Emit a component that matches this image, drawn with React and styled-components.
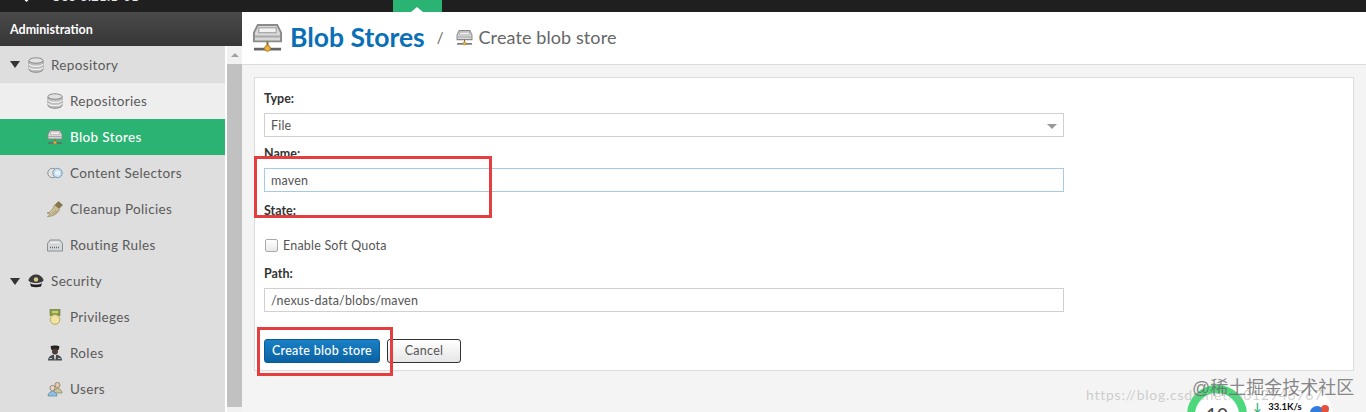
import React from "react";
import styled, { createGlobalStyle } from "styled-components";

const GlobalStyle = createGlobalStyle`
  html, body {
    margin: 0;
    padding: 0;
    height: 412px;
    overflow: hidden;
    background: #f4f4f4;
    font-family: "Lato", "Open Sans", "Liberation Sans", sans-serif;
  }
  * { box-sizing: border-box; }
`;

const Page = styled.div`
  position: relative;
  width: 1366px;
  height: 412px;
  overflow: hidden;
  display: flex;
  flex-direction: column;
`;

const TopBar = styled.div`
  position: relative;
  flex: none;
  height: 12px;
  background: #1f1f1f;
  display: flex;
  align-items: flex-end;
  padding: 0 0 9px 20px;
  gap: 18px;
  color: #e6e6e6;
  font-size: 13px;
  letter-spacing: 0.3px;
  line-height: 14px;
`;

const TopTab = styled.div`
  position: absolute;
  left: 393px;
  top: 0;
  width: 49px;
  height: 12px;
  background: #2bb373;
  &::after {
    content: "";
    position: absolute;
    left: 18px;
    bottom: 0;
    border-left: 6px solid transparent;
    border-right: 6px solid transparent;
    border-bottom: 5px solid #fff;
  }
`;

const Body = styled.div`
  flex: 1;
  display: flex;
  min-height: 0;
`;

const Sidebar = styled.aside`
  flex: none;
  width: 242px;
  display: flex;
  flex-direction: column;
`;

const SideHeader = styled.div`
  flex: none;
  height: 34px;
  background: linear-gradient(#4a4a4a, #363636);
  color: #fff;
  font-size: 12.5px;
  font-weight: 700;
  line-height: 35px;
  padding-left: 10px;
`;

const SideBody = styled.div`
  flex: 1;
  display: flex;
  min-height: 0;
`;

const Nav = styled.nav`
  flex: none;
  width: 225px;
  background: #dedede;
`;

const NavRow = styled.div`
  display: flex;
  align-items: center;
  font-size: 13.5px;
  letter-spacing: 0.35px;
  padding-left: ${(p) => (p.$sub ? "47px" : "10px")};
  height: ${(p) => (p.$tall ? "37px" : "36px")};
  color: ${(p) => (p.$active ? "#fff" : "#5a5a5a")};
  font-weight: ${(p) => (p.$active ? 500 : 400)};
  background: ${(p) =>
    p.$active ? "#2bb373" : p.$light ? "#eeeeee" : "#dedede"};
`;

const Arrow = styled.span`
  flex: none;
  width: 0;
  height: 0;
  margin-right: 8px;
  border-left: 5px solid transparent;
  border-right: 5px solid transparent;
  border-top: 7px solid #333;
`;

const IconBox = styled.span`
  flex: none;
  width: 16px;
  height: 16px;
  display: flex;
  margin-right: 7px;
  svg {
    width: 16px;
    height: 16px;
  }
`;

const Scrollbar = styled.div`
  flex: none;
  width: 17px;
  border-left: 2px solid #fff;
  background: #f1f1f1;
  display: flex;
  flex-direction: column;
  align-items: center;
`;

const ScrollUp = styled.div`
  flex: none;
  height: 18px;
  width: 100%;
  display: flex;
  justify-content: center;
  padding-top: 7px;
  &::before {
    content: "";
    width: 0;
    height: 0;
    border-left: 4px solid transparent;
    border-right: 4px solid transparent;
    border-bottom: 4px solid #a3a3a3;
  }
`;

const ScrollThumb = styled.div`
  width: 100%;
  height: 343px;
  background: #c1c1c1;
`;

const Main = styled.main`
  flex: 1;
  min-width: 0;
  display: flex;
  flex-direction: column;
`;

const PageHeader = styled.header`
  flex: none;
  height: 53px;
  background: #fff;
  border-bottom: 1px solid #dcdcdc;
  display: flex;
  align-items: center;
  padding-left: 10px;
  padding-bottom: 2px;
`;

const HeaderIcon = styled.span`
  display: flex;
  margin-right: 7px;
  svg {
    width: 31px;
    height: 31px;
  }
`;

const Title = styled.h1`
  margin: 0;
  font-size: 26.5px;
  font-weight: 700;
  color: #0a6fb7;
`;

const Slash = styled.span`
  margin: 0 12px;
  font-size: 15px;
  color: #666;
`;

const CrumbIcon = styled.span`
  display: flex;
  margin-right: 6px;
  svg {
    width: 17px;
    height: 17px;
  }
`;

const Crumb = styled.span`
  font-size: 18px;
  letter-spacing: 0.1px;
  color: #666;
`;

const Content = styled.div`
  flex: 1;
  padding: 12px 13px 0 12px;
  background: #f4f4f4;
`;

const Panel = styled.section`
  height: 294px;
  background: #fff;
  border: 1px solid #dcdcdc;
  padding: 13px 9px 0;
  width: 1100px;
`;

const Label = styled.div`
  font-size: 12.5px;
  font-weight: 700;
  color: #333;
  line-height: 15px;
  margin-bottom: 7px;
`;

const Field = styled.div`
  position: relative;
  width: 800px;
  height: 24px;
  padding: 0 6px;
  font-size: 12.5px;
  letter-spacing: 0.2px;
  line-height: 24px;
  color: #555;
  background: #fff;
  border: 1px solid ${(p) => (p.$focus ? "#a5cbe2" : "#d0d0d0")};
  margin-bottom: ${(p) => p.$gap}px;
`;

const Caret = styled.span`
  position: absolute;
  right: 6px;
  top: 10px;
  border-left: 5px solid transparent;
  border-right: 5px solid transparent;
  border-top: 5px solid #999;
`;

const CheckRow = styled.label`
  display: flex;
  align-items: center;
  gap: 5px;
  height: 14px;
  margin: 20px 0 14px 1px;
  font-size: 12.5px;
  letter-spacing: 0.2px;
  color: #555;
`;

const CheckBox = styled.span`
  width: 13px;
  height: 13px;
  background: linear-gradient(#fff, #e8e8e8);
  border: 1px solid #aaa;
  border-radius: 2px;
`;

const Actions = styled.div`
  display: flex;
  gap: 7px;
  margin-top: 27px;
`;

const Button = styled.div`
  height: 24px;
  border-radius: 3px;
  font-size: 12.5px;
  letter-spacing: 0.3px;
  line-height: 22px;
  text-align: center;
  width: ${(p) => (p.$primary ? "116px" : "74px")};
  color: ${(p) => (p.$primary ? "#fff" : "#555")};
  font-weight: ${(p) => (p.$primary ? 500 : 400)};
  background: ${(p) =>
    p.$primary
      ? "linear-gradient(#1a80c6, #0a62a4)"
      : "linear-gradient(#fff, #e6e6e6)"};
  border: 1px solid ${(p) => (p.$primary ? "#0a5a96" : "#333")};
`;

const Callout = styled.div`
  position: absolute;
  border: 3px solid #e53e3e;
  left: ${(p) => p.$x}px;
  top: ${(p) => p.$y}px;
  width: ${(p) => p.$w}px;
  height: ${(p) => p.$h}px;
`;

const SpeedWidget = styled.div`
  position: absolute;
  left: 1187px;
  top: 385px;
  width: 146px;
  height: 60px;
  background: #fff;
  border-radius: 30px;
`;

const Ring = styled.div`
  position: absolute;
  left: 0;
  top: 0;
  width: 60px;
  height: 60px;
  border-radius: 50%;
  border: 8px solid #4cd97b;
  background: #fff;
  text-align: center;
  font-size: 19px;
  line-height: 44px;
  color: #444;
`;

const Speed = styled.div`
  position: absolute;
  left: 66px;
  top: 16px;
  display: flex;
  align-items: center;
  gap: 7px;
  font-size: 9.5px;
  font-weight: 700;
  line-height: 12px;
  color: #111;
`;

const DownArrow = styled.span`
  color: #2bb373;
  font-size: 11px;
`;

const Blob = styled.div`
  position: absolute;
  left: 123px;
  top: 19px;
  display: flex;
  svg {
    width: 20px;
    height: 12px;
  }
`;

const WatermarkUrl = styled.div`
  position: absolute;
  left: 1086px;
  top: 386px;
  font-size: 14px;
  line-height: 18px;
  letter-spacing: 0.75px;
  white-space: nowrap;
  color: rgba(170, 170, 170, 0.55);
`;

const WatermarkBrand = styled.div`
  position: absolute;
  left: 1192px;
  top: 378px;
  font-family: "Liberation Sans", "Noto Sans CJK SC", sans-serif;
  font-size: 18px;
  line-height: 20px;
  white-space: nowrap;
  color: rgba(105, 105, 105, 0.8);
`;

const DbIcon = () => (
  <svg viewBox="0 0 16 16">
    <path d="M1 3.500v9c0 1.400 3.100 2.800 7 2.800s7-1.400 7-2.800v-9" fill="#bdbdbd" stroke="#8c8c8c" />
    <path d="M1 6.800c0 1.400 3.100 2.500 7 2.500s7-1.100 7-2.500M1 10c0 1.400 3.100 2.500 7 2.500s7-1.100 7-2.500" fill="none" stroke="#f4f4f4" strokeWidth="1.200" />
    <ellipse cx="8" cy="3.500" rx="7" ry="2.700" fill="#e2e2e2" stroke="#8c8c8c" />
  </svg>
);

const ServerIcon = () => (
  <svg viewBox="0 0 16 16">
    <path d="M3 1.500h10l2 4v4.500H1V5.500z" fill="#d8d8d8" stroke="#8a8a8a" />
    <rect x="3.500" y="3" width="9" height="2.500" fill="#f2f2f2" stroke="#a5a5a5" strokeWidth=".6" />
    <path d="M1.500 7.500h13" stroke="#a8a8a8" />
    <path d="M8 10v3" stroke="#8a6a2a" />
    <path d="M1 14h14" stroke="#666" strokeWidth="1.400" />
    <circle cx="8" cy="13.600" r="1.500" fill="#f0b040" stroke="#b07a20" strokeWidth=".5" />
  </svg>
);

const VennIcon = () => (
  <svg viewBox="0 0 16 16">
    <circle cx="5.500" cy="8" r="4.700" fill="#e4e4e4" stroke="#8f8f8f" />
    <circle cx="10.500" cy="8" r="4.700" fill="#c4dcee" stroke="#7d9db5" />
    <circle cx="10.500" cy="8" r="2.600" fill="#e6f1f8" />
  </svg>
);

const BrushIcon = () => (
  <svg viewBox="0 0 16 16">
    <path d="M11.500 0.500l4 3.500-3.500 3.500-4-3.500z" fill="#8a7748" stroke="#5f5230" strokeWidth=".5" />
    <path d="M7.500 4l5 4c-1 4-6 7.500-12 7.500 1.500-1 2.500-2 2.500-3-1 .3-2 .2-3-.5 3-.5 6-3.500 7.500-8z" fill="#cbbd95" stroke="#8a7a55" strokeWidth=".6" />
    <path d="M5 13l4-4M7 13.500l3.500-4" stroke="#9c8d66" strokeWidth=".6" />
  </svg>
);

const RouterIcon = () => (
  <svg viewBox="0 0 16 16">
    <path d="M3 3h10l2.500 3.500V14H.5V6.500z" fill="#d5d8da" stroke="#8a8f92" />
    <path d="M3 10.500h10" stroke="#5f6a70" strokeWidth="1.400" strokeDasharray="1 1" />
    <path d="M3.500 5.500h9" stroke="#f5f5f5" />
  </svg>
);

const CapIcon = () => (
  <svg viewBox="0 0 16 16">
    <path d="M0.500 7c1-3.500 4.500-5.500 7.500-5.500s6.500 2 7.500 5.500c0 2-3.500 3-7.500 3S.5 9 .5 7z" fill="#3a3a3a" />
    <path d="M2 10c2 2 10 2 12 0l-1 3.500c-3 1-7 1-10 0z" fill="#1f1f1f" />
    <circle cx="8" cy="6.500" r="2.200" fill="#d7c98f" />
  </svg>
);

const MedalIcon = () => (
  <svg viewBox="0 0 16 16">
    <rect x="3" y="0.500" width="10" height="6" fill="#8d9b45" stroke="#6a7630" strokeWidth=".6" />
    <rect x="5" y="2" width="6" height="2" fill="#c4cf80" />
    <circle cx="8" cy="10.500" r="4.800" fill="#efe4a2" stroke="#b5a75e" />
  </svg>
);

const OfficerIcon = () => (
  <svg viewBox="0 0 16 16">
    <path d="M3.500 1.500c2-1.200 7-1.200 9 0l-1 3.500h-7z" fill="#242424" />
    <circle cx="8" cy="6.500" r="3" fill="#4d3d34" />
    <path d="M1 15.500c0-4 3-5.800 7-5.800s7 1.800 7 5.800z" fill="#464b50" />
    <path d="M7 10h2l-.5 4.500h-1z" fill="#e8e8e8" />
    <path d="M2.500 13.500h2.500M11 13.500h2.500" stroke="#c9c9c9" />
  </svg>
);

const UsersIcon = () => (
  <svg viewBox="0 0 16 16">
    <circle cx="10.500" cy="4" r="2.600" fill="#e8c9a8" stroke="#6a5a4a" strokeWidth=".6" />
    <path d="M6.500 12c0-3 1.800-4.500 4-4.500s4.500 1.500 4.500 4.500z" fill="#c8c39a" stroke="#7a7550" strokeWidth=".6" />
    <circle cx="5.500" cy="7" r="2.600" fill="#f0d4b5" stroke="#5a5a5a" strokeWidth=".6" />
    <path d="M1 15c0-3 2-4.500 4.500-4.500S10 12 10 15z" fill="#8fc0df" stroke="#4a7ea0" strokeWidth=".6" />
  </svg>
);

const DiamondIcon = () => (
  <svg width="13" height="13" viewBox="0 0 13 13">
    <path d="M6.500 0l6 6-6 6-6-6z" fill="#fff" />
  </svg>
);

const navItems = [
  { label: "Repository", icon: <DbIcon />, tall: true },
  { label: "Repositories", icon: <DbIcon />, sub: true, light: true },
  { label: "Blob Stores", icon: <ServerIcon />, sub: true, active: true },
  { label: "Content Selectors", icon: <VennIcon />, sub: true },
  { label: "Cleanup Policies", icon: <BrushIcon />, sub: true },
  { label: "Routing Rules", icon: <RouterIcon />, sub: true },
  { label: "Security", icon: <CapIcon /> },
  { label: "Privileges", icon: <MedalIcon />, sub: true },
  { label: "Roles", icon: <OfficerIcon />, sub: true },
  { label: "Users", icon: <UsersIcon />, sub: true },
];

export default function App() {
  return (
    <Page>
      <GlobalStyle />
      <TopBar>
        <DiamondIcon />
        <span>OSS 3.21.1-01</span>
        <TopTab />
      </TopBar>
      <Body>
        <Sidebar>
          <SideHeader>Administration</SideHeader>
          <SideBody>
            <Nav>
              {navItems.map((item) => (
                <NavRow
                  key={item.label}
                  $sub={item.sub}
                  $active={item.active}
                  $light={item.light}
                  $tall={item.tall}
                >
                  {!item.sub && <Arrow />}
                  <IconBox>{item.icon}</IconBox>
                  {item.label}
                </NavRow>
              ))}
            </Nav>
            <Scrollbar>
              <ScrollUp />
              <ScrollThumb />
            </Scrollbar>
          </SideBody>
        </Sidebar>
        <Main>
          <PageHeader>
            <HeaderIcon>
              <ServerIcon />
            </HeaderIcon>
            <Title>Blob Stores</Title>
            <Slash>/</Slash>
            <CrumbIcon>
              <ServerIcon />
            </CrumbIcon>
            <Crumb>Create blob store</Crumb>
          </PageHeader>
          <Content>
            <Panel>
              <Label>Type:</Label>
              <Field $gap={9}>
                File
                <Caret />
              </Field>
              <Label>Name:</Label>
              <Field $focus $gap={11}>
                maven
              </Field>
              <Label>State:</Label>
              <CheckRow>
                <CheckBox />
                Enable Soft Quota
              </CheckRow>
              <Label>Path:</Label>
              <Field $gap={0}>/nexus-data/blobs/maven</Field>
              <Actions>
                <Button $primary>Create blob store</Button>
                <Button>Cancel</Button>
              </Actions>
            </Panel>
          </Content>
        </Main>
      </Body>
      <Callout $x={254} $y={156} $w={238} $h={62} />
      <Callout $x={257} $y={327} $w={136} $h={49} />
      <SpeedWidget>
        <Ring>10</Ring>
        <Speed>
          <DownArrow>↓</DownArrow>
          33.1K/s
        </Speed>
        <Blob>
          <svg viewBox="0 0 20 12">
            <circle cx="7" cy="9" r="7" fill="#2f7de1" />
            <circle cx="15" cy="5" r="4" fill="#e8503e" />
          </svg>
        </Blob>
      </SpeedWidget>
      <WatermarkUrl>https://blog.csdn.net/u012943767</WatermarkUrl>
      <WatermarkBrand>@稀土掘金技术社区</WatermarkBrand>
    </Page>
  );
}
